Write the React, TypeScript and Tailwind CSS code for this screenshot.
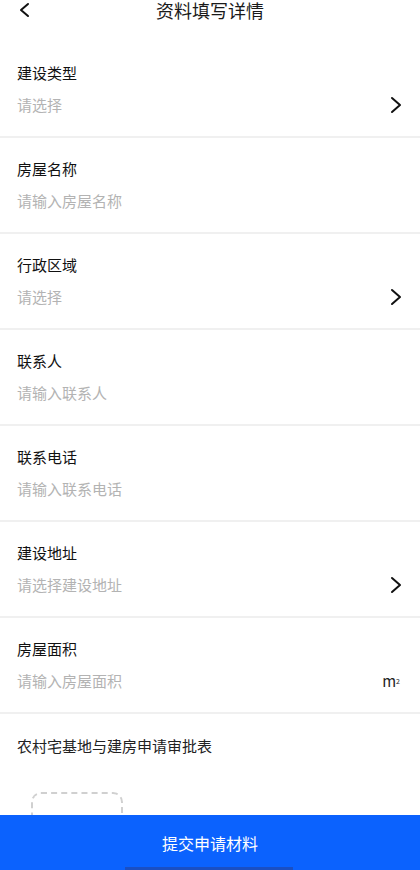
import React from 'react'

type Field = {
  label: string
  placeholder: string
  arrow?: boolean
  unit?: boolean
}

const fields: Field[] = [
  { label: '建设类型', placeholder: '请选择', arrow: true },
  { label: '房屋名称', placeholder: '请输入房屋名称' },
  { label: '行政区域', placeholder: '请选择', arrow: true },
  { label: '联系人', placeholder: '请输入联系人' },
  { label: '联系电话', placeholder: '请输入联系电话' },
  { label: '建设地址', placeholder: '请选择建设地址', arrow: true },
  { label: '房屋面积', placeholder: '请输入房屋面积', unit: true },
]

const font = { fontFamily: '"Noto Sans CJK SC", "Noto Sans", sans-serif' }

const ChevronRight = () => (
  <svg width="12" height="18" viewBox="0 0 12 18" fill="none" className="shrink-0">
    <polyline points="2,2 10,9 2,16" stroke="#111" strokeWidth="2" strokeLinecap="round" strokeLinejoin="round" />
  </svg>
)

const FieldRow = ({ field }: { field: Field }) => (
  <div className="flex flex-col border-b-2 border-[#f0f0f0] pl-[17px] pr-[18px] pt-[20px] pb-[20px]">
    <div className="text-[15px] leading-[22px] text-[#111]">{field.label}</div>
    <div className="mt-[10px] flex h-[22px] items-center justify-between">
      <span className="text-[15px] leading-[22px] text-[#b3b3b3]">{field.placeholder}</span>
      {field.arrow && <ChevronRight />}
      {field.unit && (
        <span className="pr-[2px] text-[15px] leading-[22px] text-[#222]">
          m<sup className="text-[7px]">2</sup>
        </span>
      )}
    </div>
  </div>
)

export default function App() {
  return (
    <div style={font} className="flex h-[870px] w-[420px] flex-col overflow-hidden bg-white">
      {/* header */}
      <div className="relative flex h-[42px] shrink-0 justify-center pt-[1px]">
        <svg width="12" height="16" viewBox="0 0 12 16" fill="none" className="absolute left-[18px] top-[2px]">
          <polyline points="10,2 3,8 10,14" stroke="#111" strokeWidth="2" strokeLinecap="round" strokeLinejoin="round" />
        </svg>
        <div className="text-[18px] leading-[19px] text-[#1a1a1a]">资料填写详情</div>
      </div>

      <div className="flex-1 overflow-hidden">
        {fields.map((f) => (
          <FieldRow key={f.label} field={f} />
        ))}
        <div className="pl-[17px] pt-[21px]">
          <div className="text-[15px] leading-[22px] text-[#222]">农村宅基地与建房申请审批表</div>
          <div className="ml-[14px] mt-[35px] h-[92px] w-[92px] rounded-[10px] border-2 border-dashed border-[#d0d0d0]" />
        </div>
      </div>

      {/* submit */}
      <div className="relative flex h-[55px] shrink-0 items-center justify-center bg-[#0b62fe]">
        <span className="mt-[1px] text-[16px] text-white">提交申请材料</span>
        <div className="absolute bottom-0 left-[125px] h-[3px] w-[168px] bg-[#1a4fc4]" />
      </div>
    </div>
  )
}
